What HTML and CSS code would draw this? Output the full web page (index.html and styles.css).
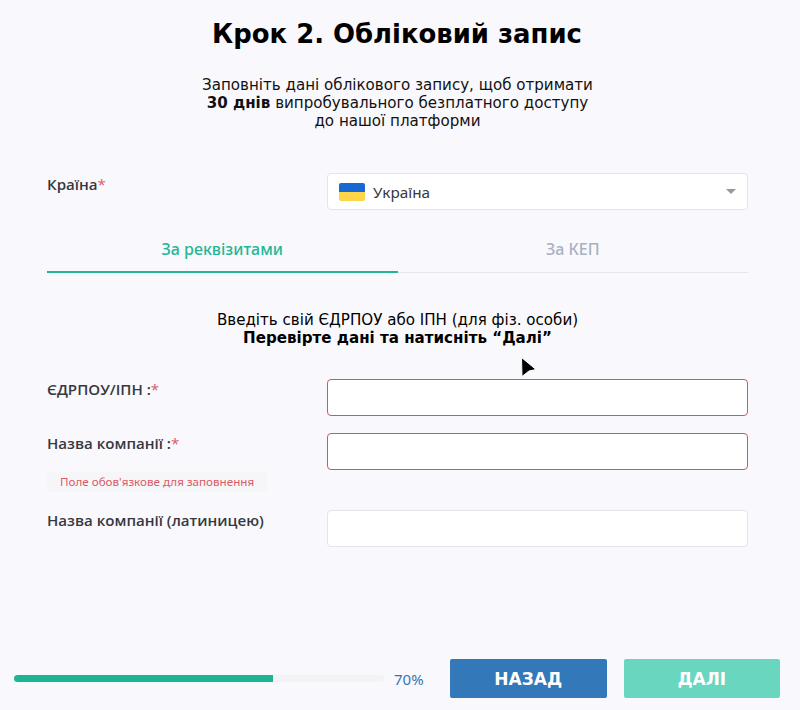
FILE: index.html
```html
<!DOCTYPE html>
<html lang="uk">
<head>
<meta charset="utf-8">
<title>Обліковий запис</title>
<link rel="stylesheet" href="styles.css">
</head>
<body>
<main class="page">
  <h1 class="title"><span>Крок 2. Обліковий запис</span></h1>
  <p class="intro"><span>Заповніть дані облікового запису, щоб отримати</span><br><span><b>30 днів</b> випробувального безплатного доступу</span><br><span>до нашої платформи</span></p>
  <form class="form">
    <div class="row country">
      <label>Країна<i>*</i></label>
      <div class="field select"><span class="flag"></span><span class="value">Україна</span><span class="caret"></span></div>
    </div>
    <nav class="tabs"><a class="tab active">За реквізитами</a><a class="tab">За КЕП</a></nav>
    <p class="hint">Введіть свій ЄДРПОУ або ІПН (для фіз. особи)<br><b>Перевірте дані та натисніть “Далі”</b></p>
    <div class="row code"><label>ЄДРПОУ/ІПН :<i>*</i></label><div class="field invalid"></div></div>
    <div class="row company"><label>Назва компанії :<i>*</i></label><div class="field invalid"></div></div>
    <div class="error"><span>Поле обов'язкове для заповнення</span></div>
    <div class="row latin"><label>Назва компанії (латиницею)</label><div class="field"></div></div>
  </form>
  <footer class="footer">
    <div class="progress"><div class="bar"></div></div>
    <span class="percent">70%</span>
    <button class="btn back">НАЗАД</button>
    <button class="btn next">ДАЛІ</button>
  </footer>
</main>
<svg class="cursor" width="18" height="22" viewBox="0 0 18 22"><path d="M1.5 1.5L16 13.5L9 15L2 20.5Z" fill="#000" stroke="#fff"/></svg>
</body>
</html>
```
FILE: styles.css
```css
* { box-sizing: border-box; }
body { margin: 0; background: #f9f8fd; font-family: "Noto Sans", sans-serif; color: #35383d; }
.page { height: 710px; display: flex; flex-direction: column; overflow: hidden; }
.title { margin: 18px 0 0; padding-right: 6px; text-align: center; font: bold 25.9px/32px "DejaVu Sans", sans-serif; color: #000; }
.intro { margin: 26px 0 0; padding-right: 5px; text-align: center; font: 15.1px/18px "DejaVu Sans", sans-serif; color: #111; }
.form { width: 701px; margin: 43px 0 0 47px; }
.row { display: grid; grid-template-columns: 280px 421px; height: 54px; }
.row label { font-family: "Open Sans", sans-serif; font-size: 15.1px; line-height: 23px; font-weight: 600; }
.row i { font-style: normal; font-weight: 500; color: #dc5b68; }
.field { height: 37px; border: 1px solid #e4e4ed; border-radius: 4px; background: #fff; }
.invalid { border-color: #cc5866; }
.select { display: flex; align-items: center; padding: 0 11px 0 11px; font-size: 15.3px; }
.value { line-height: 20px; }
.flag { width: 26px; height: 18px; border-radius: 2px; background: linear-gradient(#1768d2 50%, #ffd64a 50%); margin-right: 8px; }
.caret { margin-left: auto; border: 5px solid transparent; border-top-color: #999; border-bottom: 0; }
.tabs { display: flex; height: 46px; border-bottom: 1px solid #e5e6ed; }
.tab { flex: 1; text-align: center; font-size: 16px; line-height: 44px; font-weight: 500; color: #a9b1c2; }
.active { height: 46px; color: #23b694; border-bottom: 2px solid #23b694; }
.hint { margin: 38px 0 32px; text-align: center; font: 15.1px/18px "DejaVu Sans", sans-serif; color: #000; }
.code label, .company label { line-height: 21px; }
.latin label { line-height: 21px; }
.company { height: 39px; }
.error { height: 38px; }
.error span { display: block; width: 220px; height: 20px; background: #f6f6f8; color: #da5a67; font-size: 11.65px; line-height: 20px; padding-left: 13px; border-radius: 3px; }
.footer { margin-top: auto; padding: 0 20px 12px 14px; display: flex; align-items: flex-start; height: 51px; }
.progress { width: 370px; height: 7px; margin-top: 16px; background: #f3f3f5; border-radius: 4px; overflow: hidden; }
.bar { width: 70%; height: 100%; background: #1bb592; }
.percent { width: 66px; padding-left: 10px; font-size: 15px; line-height: 40px; color: #3577b5; }
.btn { width: 156.5px; height: 39px; border: 0; border-radius: 2px; color: #fff; font: bold 17px "DejaVu Sans", sans-serif; }
.back { background: #3378b8; margin-right: 17px; }
.next { background: #69d6c0; }
.cursor { position: absolute; left: 520px; top: 356px; }
```
